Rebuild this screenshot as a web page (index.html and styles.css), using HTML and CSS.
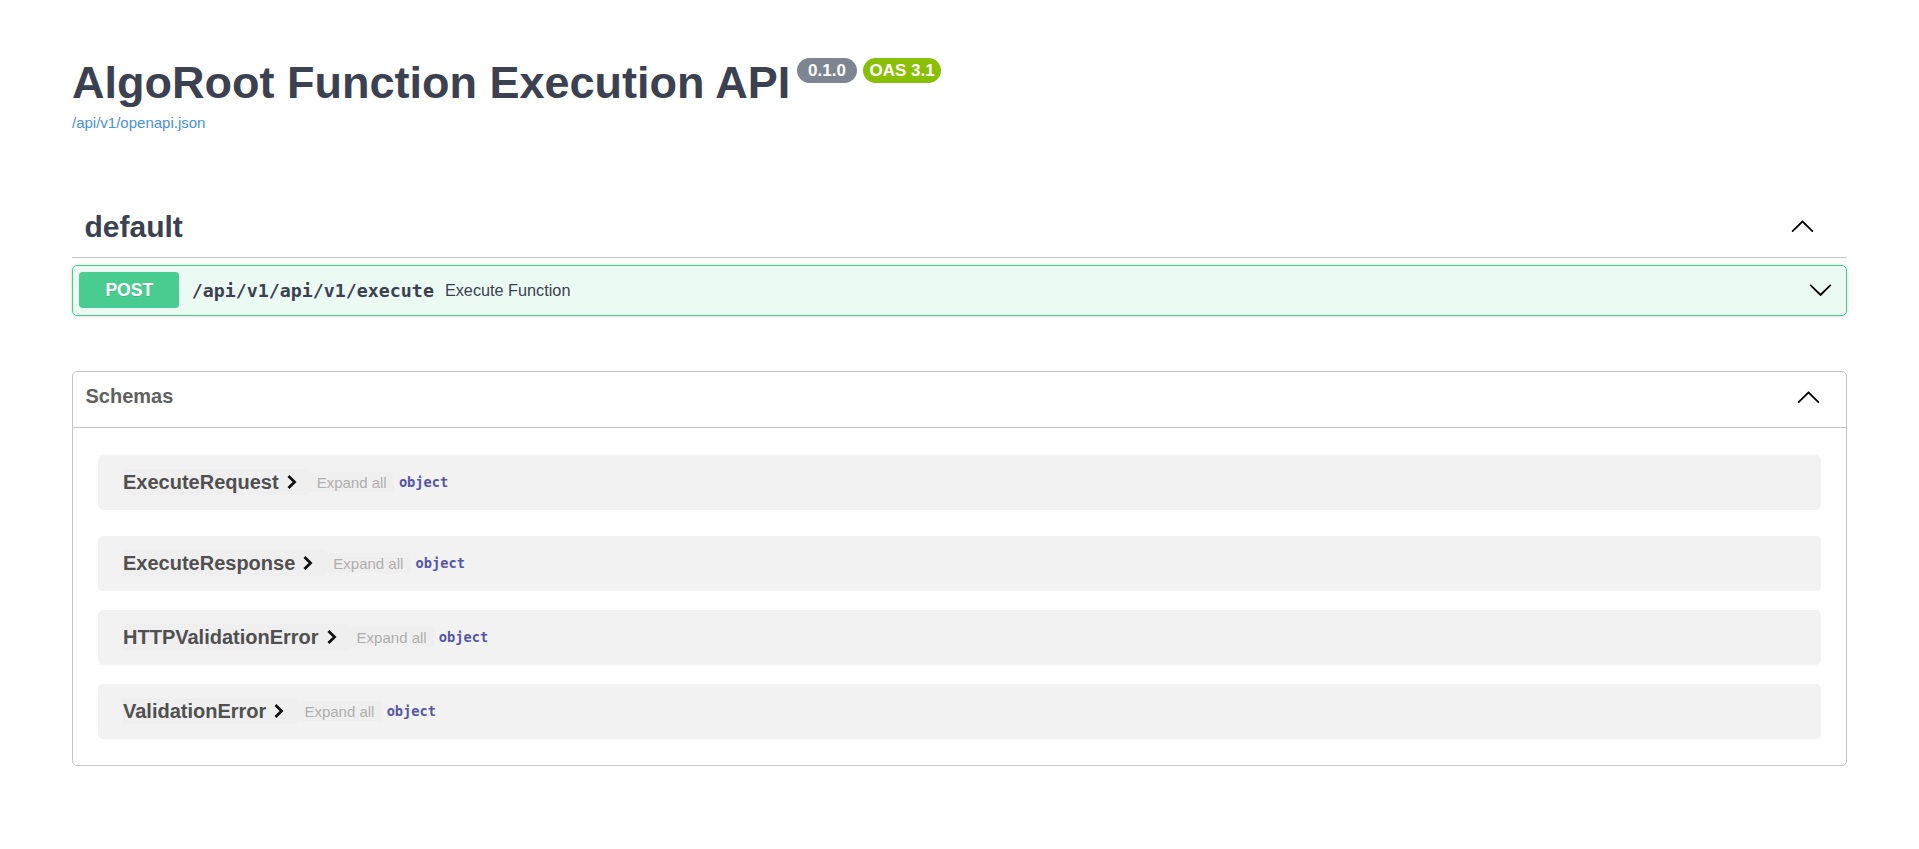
FILE: index.html
```html
<!DOCTYPE html>
<html lang="en">
<head>
<meta charset="utf-8">
<title>AlgoRoot Function Execution API - Swagger UI</title>
<link rel="stylesheet" href="styles.css">
</head>
<body>
<div class="wrapper">
  <section class="info">
    <hgroup class="main">
      <h2 class="title"><span class="title-text">AlgoRoot Function Execution API</span><span class="badges"><small class="badge version"><pre> 0.1.0 </pre></small><small class="badge oas"><pre>OAS 3.1</pre></small></span></h2>
      <a class="url" href="#">/api/v1/openapi.json</a>
    </hgroup>
  </section>

  <section class="tag-section">
    <h3 class="tag">
      <a class="tag-name">default</a>
      <button class="expand" aria-label="Collapse">
        <svg class="arrow" viewBox="0 0 20 20"><path transform="translate(0 21.017) scale(1 -1)" d="M17.418 6.109c.272-.268.709-.268.979 0s.271.701 0 .969l-7.908 7.83c-.27.268-.707.268-.979 0l-7.908-7.83c-.27-.268-.27-.701 0-.969.271-.268.709-.268.979 0L10 13.25l7.418-7.141z"/></svg>
      </button>
    </h3>
    <div class="opblock">
      <div class="summary">
        <span class="method">POST</span>
        <span class="path">/api/v1/api/v1/execute</span>
        <span class="desc">Execute Function</span>
        <svg class="arrow op-arrow" viewBox="0 0 20 20"><path d="M17.418 6.109c.272-.268.709-.268.979 0s.271.701 0 .969l-7.908 7.83c-.27.268-.707.268-.979 0l-7.908-7.83c-.27-.268-.27-.701 0-.969.271-.268.709-.268.979 0L10 13.25l7.418-7.141z"/></svg>
      </div>
    </div>
  </section>

  <section class="models">
    <h4 class="models-head">
      <span class="models-title">Schemas</span>
      <svg class="arrow" viewBox="0 0 20 20"><path transform="translate(0 21.017) scale(1 -1)" d="M17.418 6.109c.272-.268.709-.268.979 0s.271.701 0 .969l-7.908 7.83c-.27.268-.707.268-.979 0l-7.908-7.830c-.27-.268-.27-.701 0-.969.271-.268.709-.268.979 0L10 13.25l7.418-7.141z"/></svg>
    </h4>
    <div class="model-list">
      <div class="model">
        <button class="accordion"><span class="model-title">ExecuteRequest</span><svg class="chev" viewBox="0 0 24 24"><path d="M9.2 6.6 14.8 12 9.2 17.4"/></svg></button><button class="expand-deep">Expand all</button><strong class="type">object</strong>
      </div>
      <div class="model">
        <button class="accordion"><span class="model-title">ExecuteResponse</span><svg class="chev" viewBox="0 0 24 24"><path d="M9.2 6.6 14.8 12 9.2 17.4"/></svg></button><button class="expand-deep">Expand all</button><strong class="type">object</strong>
      </div>
      <div class="model">
        <button class="accordion"><span class="model-title">HTTPValidationError</span><svg class="chev" viewBox="0 0 24 24"><path d="M9.2 6.6 14.8 12 9.2 17.4"/></svg></button><button class="expand-deep">Expand all</button><strong class="type">object</strong>
      </div>
      <div class="model">
        <button class="accordion"><span class="model-title">ValidationError</span><svg class="chev" viewBox="0 0 24 24"><path d="M9.2 6.6 14.8 12 9.2 17.4"/></svg></button><button class="expand-deep">Expand all</button><strong class="type">object</strong>
      </div>
    </div>
  </section>
</div>
</body>
</html>
```

FILE: styles.css
```css
* { box-sizing: border-box; }

html, body {
  margin: 0;
  background: #ffffff;
}

body {
  font-family: "Liberation Sans", Arial, sans-serif;
  color: #3b4151;
}

.wrapper {
  max-width: 1825px;
  margin: 0 auto;
  padding: 0 25px;
}

/* ---------- info ---------- */
.info {
  padding-top: 57.4px;
}

.main {
  margin: 0;
}

.title {
  display: flex;
  align-items: flex-start;
  margin: 0;
  font-size: 45px;
  line-height: 51.7px;
  font-weight: 700;
  color: #3b4151;
}

.badges {
  display: flex;
  gap: 6px;
  margin: 0.6px 0 0 6.5px;
}

.badge {
  display: block;
  padding: 3px 6.5px;
  border-radius: 71px;
}

.badge pre {
  margin: 0;
  font-family: "Liberation Sans", Arial, sans-serif;
  font-size: 17px;
  line-height: 19.5px;
  font-weight: 700;
  color: #ffffff;
}

.version { background: #7d8492; }
.oas { background: #89bf04; }

.url {
  display: block;
  width: max-content;
  margin-top: 5.4px;
  font-size: 15px;
  line-height: 17.2px;
  color: #4990e2;
  text-decoration: none;
}

/* ---------- tag section ---------- */
.tag-section {
  margin-top: 66.3px;
}

.tag {
  display: flex;
  align-items: center;
  margin: 0 0 6.25px;
  padding: 12.5px 25px 12.5px 12.5px;
  border-bottom: 1.25px solid rgba(59, 65, 81, 0.3);
  font-size: 30px;
  line-height: 34.5px;
  font-weight: 700;
  color: #3b4151;
}

.tag-name {
  flex: 1;
}

.expand {
  display: flex;
  margin: 0 7px 5px 0;
  padding: 0;
  border: 0;
  background: none;
}

.arrow {
  display: block;
  width: 25px;
  height: 25px;
  fill: #000000;
}

.opblock {
  margin: 0;
  border: 1.25px solid #49cc90;
  border-radius: 5px;
  background: rgba(73, 204, 144, 0.1);
  box-shadow: 0 0 3.75px rgba(0, 0, 0, 0.19);
}

.summary {
  display: flex;
  align-items: center;
  padding: 6.25px;
}

.method {
  min-width: 100px;
  padding: 8.2px 0;
  border-radius: 3.75px;
  background: #49cc90;
  color: #ffffff;
  font-size: 17.5px;
  line-height: 20.1px;
  font-weight: 700;
  text-align: center;
  text-shadow: 0 1px 0 rgba(0, 0, 0, 0.1);
}

.path {
  padding: 0 11px 0 12.5px;
  font-family: "DejaVu Sans Mono", "Liberation Mono", monospace;
  font-size: 18.3px;
  font-weight: 700;
  color: #3b4151;
}

.desc {
  flex: 1;
  font-size: 16.25px;
  color: #3b4151;
}

.op-arrow {
  margin: 0 6.5px 2px 0;
}

/* ---------- models ---------- */
.models {
  margin-top: 55.5px;
  border: 1.25px solid rgba(59, 65, 81, 0.3);
  border-radius: 5px;
}

.models-head {
  display: flex;
  align-items: center;
  height: 55.45px;
  margin: 0;
  padding: 10px 25px 15px 12.5px;
  border-bottom: 1.25px solid rgba(59, 65, 81, 0.3);
  font-size: 20px;
  line-height: 23px;
  font-weight: 700;
  color: #606060;
}

.models-title {
  flex: 1;
}

.model-list {
  padding: 27px 25px 26px;
}

.model {
  display: flex;
  align-items: center;
  height: 55px;
  margin-bottom: 19px;
  padding: 0 25px;
  border-radius: 5px;
  background: rgba(0, 0, 0, 0.05);
}

.model:first-child {
  margin-bottom: 26px;
}

.model:last-child {
  margin-bottom: 0;
}

.accordion {
  display: flex;
  align-items: center;
  padding: 1.25px 6.5px 1.25px 0;
  border: 0;
  background: #efefef;
  font-family: "Liberation Sans", Arial, sans-serif;
  font-size: 20px;
  line-height: 23px;
  font-weight: 700;
  color: #505050;
}

.chev {
  display: block;
  width: 22px;
  height: 22px;
  margin-left: 2px;
  fill: none;
  stroke: #111111;
  stroke-width: 3;
  stroke-linecap: square;
  stroke-linejoin: miter;
}

.expand-deep {
  padding: 1.25px 7.5px;
  border: 0;
  background: #efefef;
  font-family: "Liberation Sans", Arial, sans-serif;
  font-size: 15px;
  line-height: 17.2px;
  color: #afaeae;
}

.type {
  margin-left: 4.7px;
  font-family: "DejaVu Sans Mono", "Liberation Mono", monospace;
  font-size: 13.7px;
  font-weight: 700;
  color: #5555aa;
}
```
